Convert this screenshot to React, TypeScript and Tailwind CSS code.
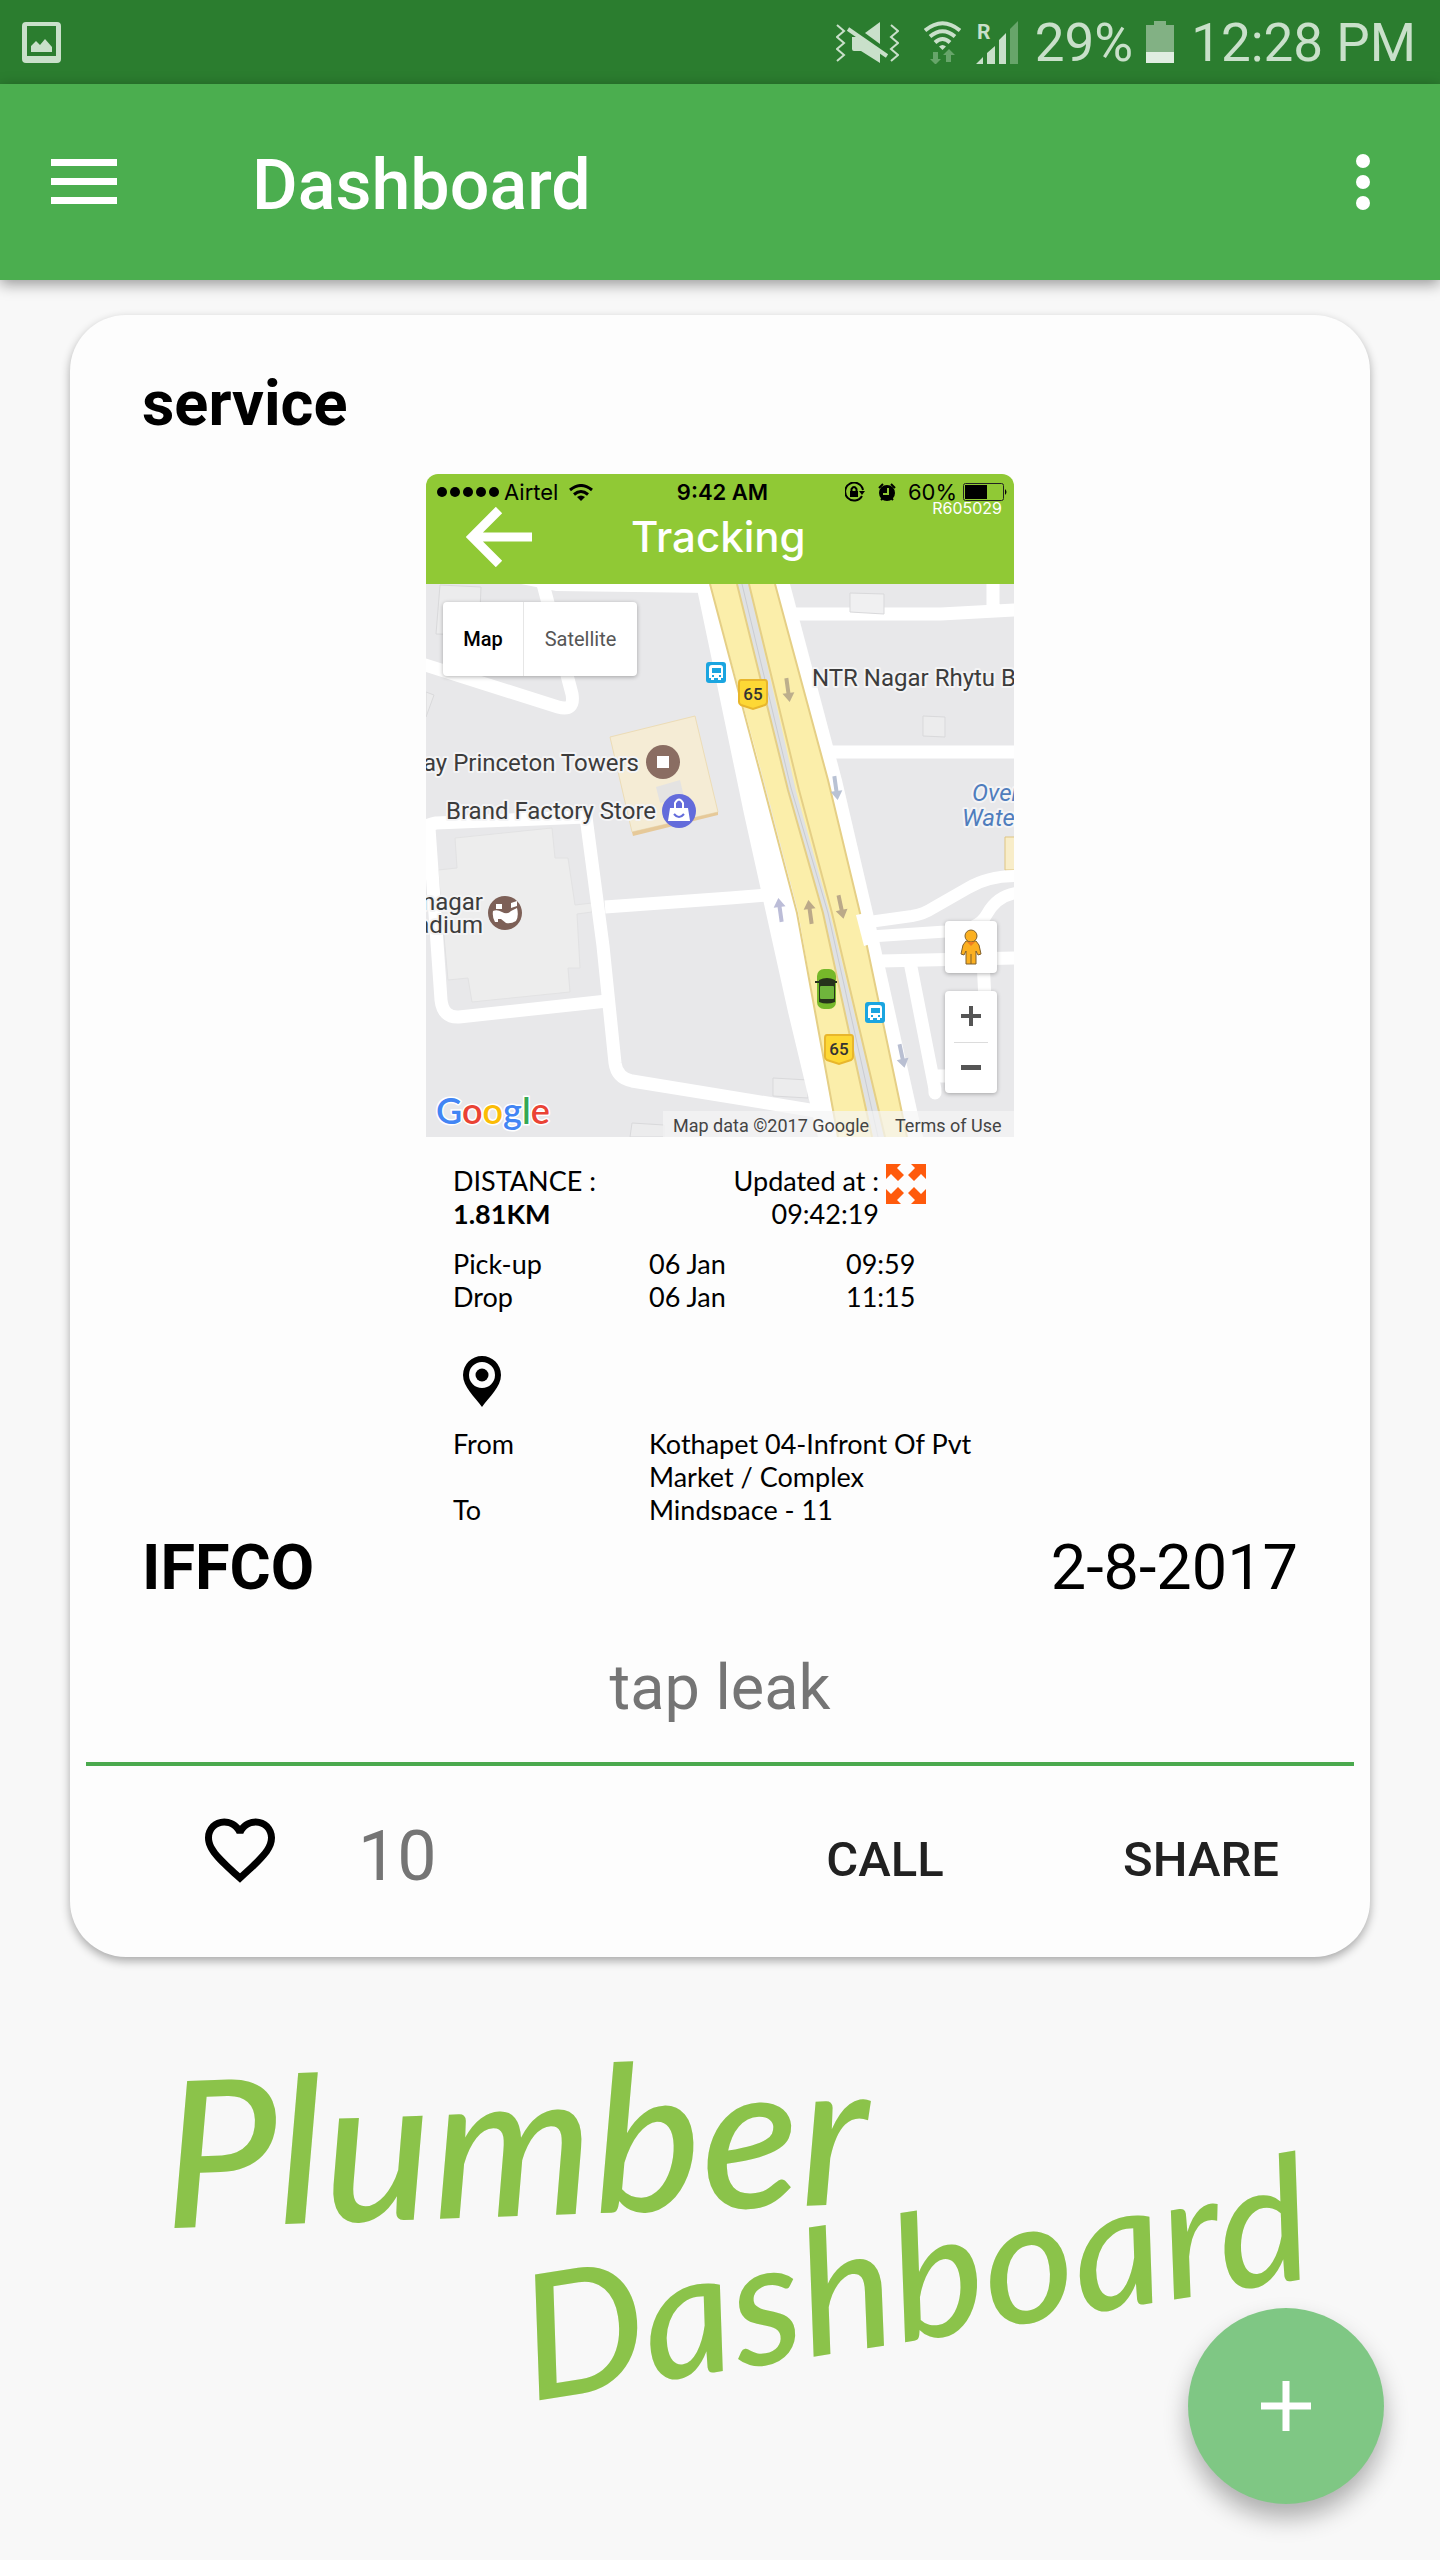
import React from 'react';

const MuteVibrateIcon = () => (
  <svg className="h-[41px] w-[63px]" viewBox="0 0 63 41" fill="#c9e0ca" aria-hidden="true">
    <path d="M1 3l7 6-7 6 7 6-7 6 7 6-7 6M55 3l7 6-7 6 7 6-7 6 7 6-7 6" fill="none" stroke="#c9e0ca" strokeWidth={2} />
    <path d="M29 11L44 0v22z" />
    <path d="M16 15h5l23 15v11L25 29h-7q-2 0-2-2z" />
    <path d="M12 7l39 27" stroke="#c9e0ca" strokeWidth={4} />
  </svg>
);

const StatusWifiIcon = () => (
  <svg className="h-[43px] w-[37px]" viewBox="0 0 37 43" fill="none" stroke="#c9e0ca" strokeWidth={4} aria-hidden="true">
    <path d="M1 9.500Q18.500-5 36 9.500M6 15.500Q18.500 5 31 15.500M11 21.500Q18.500 14.500 26 21.500" />
    <path d="M15 25.500q3.500-3 7 0L18.500 29z" fill="#c9e0ca" stroke="none" />
    <path d="M9 31h5v7h3l-5.500 5.500L6 38h3zM22 41h5v-7h4l-6-6-6 6h3z" fill="#67a56a" stroke="none" />
  </svg>
);

const SignalIcon = () => (
  <svg className="h-[43px] w-[43px]" viewBox="0 0 43 43" fill="#c9e0ca" aria-hidden="true">
    <text x="1" y="18" className="font-['Roboto',sans-serif] text-[21px] font-bold">R</text>
    <path d="M0 43l7-7v7zM11 43V32l8-7v18zM23 43V19l7-7v31z" />
    <path d="M34 43V8l8-8v43z" fill="#67a56a" />
  </svg>
);

const BatteryIcon = () => (
  <svg className="h-[42px] w-[28px]" viewBox="0 0 28 42" aria-hidden="true">
    <path d="M0 4h8V0h12v4h8v27H0z" fill="#82b184" />
    <path d="M0 31h28v11H0z" fill="#e0eee1" />
  </svg>
);

const StatusBar = () => (
  <div className="flex h-[84px] items-center justify-between bg-[#2b7d2f] pr-[24px] pl-[22px] text-[53px] leading-none text-[#c9e0ca]">
    <svg className="h-[41px] w-[39px]" viewBox="0 0 39 41" fill="#c9e0ca" aria-hidden="true">
      <path fillRule="evenodd" d="M4 0h31q4 0 4 4v33q0 4-4 4H4q-4 0-4-4V4q0-4 4-4zm1 4v30h29V4z" />
      <path d="M9 30v-6l5-5 4 4 5-6 7 8v5z" />
    </svg>
    <div className="flex items-center">
      <MuteVibrateIcon />
      <div className="ml-[25px]"><StatusWifiIcon /></div>
      <div className="ml-[15px]"><SignalIcon /></div>
      <span className="ml-[16px] pt-[2px]">29%</span>
      <div className="ml-[13px]"><BatteryIcon /></div>
      <span className="ml-[17px] pt-[2px]">12:28 PM</span>
    </div>
  </div>
);

const AppBar = () => (
  <div className="flex h-[196px] items-center bg-[#4bae4f] pr-[70px] pl-[51px] text-white shadow-[0_4px_14px_rgba(0,0,0,0.4)]">
    <button type="button" aria-label="Open menu">
      <svg className="h-[46px] w-[66px]" viewBox="0 0 66 46" fill="currentColor">
        <path d="M0 0h66v7H0zM0 19h66v7H0zM0 38h66v7H0z" />
      </svg>
    </button>
    <h1 className="ml-[135px] pt-[6px] text-[70px] leading-none font-medium">Dashboard</h1>
    <button type="button" aria-label="More options" className="ml-auto">
      <svg className="h-[56px] w-[14px]" viewBox="0 0 14 56" fill="currentColor">
        <circle cx="7" cy="7" r="7" />
        <circle cx="7" cy="28" r="7" />
        <circle cx="7" cy="49" r="7" />
      </svg>
    </button>
  </div>
);

interface PointProps {
  x: number;
  y: number;
}

const BusStop = ({ x, y }: PointProps) => (
  <g transform={`translate(${x} ${y})`}>
    <rect width="20" height="21" rx="3" fill="#1ba5e0" />
    <path fillRule="evenodd" d="M6 3h8q3 0 3 3v10h-2v2h-3v-2H8v2H5v-2H3V6q0-3 3-3zm0 3v5h9V6zM6 13v2h2v-2zm7 0v2h2v-2z" fill="#fff" />
  </g>
);

const RouteShield = ({ x, y }: PointProps) => (
  <g transform={`translate(${x} ${y})`}>
    <path d="M3 1h24q2 0 2 3v19q0 2-2 3l-12 4-12-4q-2-1-2-3V4q0-3 2-3z" fill="#fdd835" stroke="#e8b62c" strokeWidth={2} />
    <text x="15" y="21" textAnchor="middle" fill="#333" className="text-[17px] font-medium">65</text>
  </g>
);

const DirectionArrow = ({ x, y, angle, color }: PointProps & { angle: number; color: string }) => (
  <path d="M-2-12h4V3h4L0 12-6 3h4z" fill={color} transform={`translate(${x} ${y}) rotate(${angle})`} />
);

const MapDrawing = () => (
  <svg className="block w-full" viewBox="0 0 588 553" role="img" aria-label="Map of NTR Nagar">
    <rect width="588" height="553" fill="#e8e8ea" />

    {/* buildings */}
    <g fill="#ececed" stroke="#d9d9db" strokeWidth={1}>
      <path d="M14 1l41 2-2 48-43-1z" />
      <path d="M0 108l8 3-8 22z" />
      <path d="M497 132l22 1v20l-22-1zM347 494l35 2v18l-35-2zM204 553l2-14 32 2v12z" />
    </g>
    <path d="M29 254l97-10 3 30h13l7 47 17-2v9l-15 2 3 54h-12l2 24-98 10-4-24-20 2-10-110 19-2z" fill="#ededed" stroke="#e2e2e3" />
    <path d="M184 153l85-21 23 96-86 20z" fill="#f5ecd5" stroke="#ecdcb6" />
    <path d="M206 248l86-20v3l-85 21z" fill="#e6c999" />
    <path d="M230 203l24-7 4 17-24 6z" fill="#e4e3e2" />
    <path d="M579 253h10v33h-10z" fill="#f8edc9" stroke="#dfc582" />

    {/* minor roads */}
    <g fill="none" stroke="#fff" strokeWidth={13} strokeLinejoin="round">
      <path d="M117 0l29 110q3 18-14 13L-4 80" />
      <path d="M-4 244q8-4 14-5l150-6 17 129 12 117q2 15 17 18l184 30" />
      <path d="M3 244l12 172q2 18 18 17l148-16" />
      <path d="M179 323l125-9 62-5" />
      <path d="M365 30h150q40-2 75-4M567 0v28M400 168h188" />
      <path d="M436 339l50-7q12-2 21-8l35-20q20-12 48-12" strokeWidth={12} />
      <path d="M437 353l90-6q26-2 34-17 10-18 29-21" strokeWidth={12} />
      <path d="M455 377l135-3M484 378l24 122q1 4 1 9M557 376l2 40M509 492h20" strokeLinecap="round" />
    </g>
    <path d="M424 9l34 1v20l-34-2z" fill="#f0f0f1" stroke="#d9d9db" />
    <path d="M95 0h190v9L130 7z" fill="#fff" />
    <path d="M270 0h20l47 196 61 230 30 127h-36l-30-125-44-198z" fill="#fff" />
    <path d="M345 0h19l52 196 31 133 50 224h-20z" fill="#fff" />

    {/* highway 65 */}
    <path d="M307 0h20l65 270 75 283h-22L362 216z" fill="#dfe1e3" />
    <path d="M284 0h27l50 206 36 123 50 224h-36l-39-226-30-115z" fill="#fbeeaa" />
    <path d="M284 0l52 196 35 133 41 224M311 0l51 206 35 123 49 224" fill="none" stroke="#e5cf86" strokeWidth={2} />
    <path d="M323 0h26l53 196 32 133 47 224h-22l-55-224-34-122z" fill="#fbeeaa" />
    <path d="M323 0l50 206 33 123 53 224M349 0l53 196 32 133 47 224" fill="none" stroke="#e5cf86" strokeWidth={2} />
    <path d="M316 0l49 204 37 125 50 224" fill="none" stroke="#c9cbd0" strokeWidth={1} />
    <path d="M430 331l10-2 8 30-10 3z" fill="#fff" />

    <DirectionArrow x={362} y={106} angle={-8} color="#bcae8c" />
    <DirectionArrow x={410} y={204} angle={-8} color="#b9c2d4" />
    <DirectionArrow x={354} y={326} angle={172} color="#bcbdd8" />
    <DirectionArrow x={384} y={328} angle={172} color="#bba989" />
    <DirectionArrow x={415} y={323} angle={-12} color="#bba989" />
    <DirectionArrow x={476} y={472} angle={-12} color="#b9bfd2" />

    <BusStop x={280} y={78} />
    <BusStop x={439} y={418} />
    <RouteShield x={312} y={95} />
    <RouteShield x={398} y={450} />

    {/* tracked car */}
    <rect x="391" y="385" width="19" height="40" rx="7" fill="#76b82a" />
    <path d="M393 396q8-4 16 0v22q-8 3-16 0z" fill="#26331b" />
    <path d="M389 398h22" stroke="#26331b" strokeWidth={2} />
    <rect x="394" y="402" width="14" height="13" rx="1" fill="#6fb53c" />

    {/* places */}
    <circle cx="237" cy="178" r="17" fill="#8a6d62" />
    <path d="M231 172h12v12h-12z" fill="#fff" />
    <circle cx="253" cy="227" r="17" fill="#636bdb" />
    <path d="M244 224h18l2 13h-22z" fill="#fff" />
    <path d="M249 224v-5q4-7 8 0v5" fill="none" stroke="#fff" strokeWidth={2} />
    <path d="M248 230q5 6 10 0" fill="none" stroke="#636bdb" strokeWidth={2} />
    <circle cx="79" cy="329" r="17" fill="#7d6057" />
    <path d="M67 327q4-2 9 1t9-1l6-3q2 8-1 13-5 3-10 2l-5-4h-3v3h-3q-3-5-2-11zM70 320h6v5h-6zM85 319l6-2v5l-6 2z" fill="#fff" />

    <g fill="#3c3c3c" stroke="#f4f4f5" strokeWidth={4} strokeLinejoin="round" className="text-[24px] [paint-order:stroke]">
      <text x="213" y="187" textAnchor="end">ay Princeton Towers</text>
      <text x="20" y="235">Brand Factory Store</text>
      <text x="386" y="102">NTR Nagar Rhytu B</text>
      <text x="57" y="326" textAnchor="end">nagar</text>
      <text x="57" y="349" textAnchor="end">adium</text>
      <text x="546" y="217" fill="#4f7dbd" className="italic">Over</text>
      <text x="536" y="242" fill="#4f7dbd" className="italic">Water</text>
    </g>

    <path d="M237 527h351v26H237z" fill="#f5f5f5" fillOpacity={0.7} />
    <g fill="#444" className="text-[18px]">
      <text x="247" y="548">Map data ©2017 Google</text>
      <text x="469" y="548">Terms of Use</text>
    </g>
    <text x="10" y="540" stroke="#fff" strokeWidth={3} className="font-['Lato',sans-serif] text-[36px] font-semibold [paint-order:stroke]">
      <tspan fill="#4285f4">G</tspan>
      <tspan fill="#ea4335">o</tspan>
      <tspan fill="#fbbc05">o</tspan>
      <tspan fill="#4285f4">g</tspan>
      <tspan fill="#34a853">l</tspan>
      <tspan fill="#ea4335">e</tspan>
    </text>
  </svg>
);

const MapView = () => (
  <div className="relative">
    <MapDrawing />
    <div className="absolute top-[18px] left-[17px] flex h-[74px] rounded-sm bg-white text-[20px] shadow-[0_1px_4px_rgba(0,0,0,0.3)]">
      <button type="button" className="w-[81px] border-r border-[#e6e6e6] font-medium text-black">Map</button>
      <button type="button" className="w-[113px] text-[#565656]">Satellite</button>
    </div>
    <div className="absolute right-[17px] bottom-[44px] flex w-[52px] flex-col gap-[18px]">
      <button type="button" aria-label="Street view" className="flex h-[52px] items-center justify-center rounded-sm bg-white shadow-[0_1px_4px_rgba(0,0,0,0.3)]">
        <svg className="h-[36px] w-[22px]" viewBox="0 0 22 36" fill="#fbb021" stroke="#80602c" strokeWidth={1}>
          <path d="M6 12h10l3 4 2 9-3 1-2-4v13H6V22l-2 4-3-1 2-9z" />
          <circle cx="11" cy="7" r="6" />
          <path d="M7 13l4 4 4-4z" fill="#ef7d22" stroke="none" />
          <path d="M11 25v10" />
        </svg>
      </button>
      <div className="flex h-[102px] flex-col items-center rounded-sm bg-white text-[#555] shadow-[0_1px_4px_rgba(0,0,0,0.3)]">
        <button type="button" aria-label="Zoom in" className="flex flex-1 items-center">
          <svg className="size-[20px]" viewBox="0 0 20 20" fill="currentColor"><path d="M8 0h4v8h8v4h-8v8H8v-8H0V8h8z" /></svg>
        </button>
        <div className="h-px w-[34px] bg-[#dcdcdc]" />
        <button type="button" aria-label="Zoom out" className="flex flex-1 items-center">
          <svg className="size-[20px]" viewBox="0 0 20 20" fill="currentColor"><path d="M0 7h20v5H0z" /></svg>
        </button>
      </div>
    </div>
  </div>
);

const TrackingHeader = () => (
  <div className="relative h-[110px] bg-[#90c935]">
    <div className="grid h-[36px] grid-cols-[1fr_auto_1fr] items-center pr-[6px] pl-[11px] font-['Inter',sans-serif] text-[22px] leading-none text-black">
      <div className="flex items-center">
        <svg className="h-[10px] w-[62px]" viewBox="0 0 62 10" aria-hidden="true">
          {[5, 18, 31, 44, 57].map((cx) => (
            <circle key={cx} cx={cx} cy="5" r="5" />
          ))}
        </svg>
        <span className="ml-[5px]">Airtel</span>
        <svg className="ml-[11px] h-[17px] w-[24px]" viewBox="0 0 24 17" fill="none" stroke="#000" strokeWidth={3} aria-hidden="true">
          <path d="M1 6q11-9 22 0M5 10.500q7-6 14 0" />
          <path d="M8 13q4-3 8 0l-4 4z" fill="#000" stroke="none" />
        </svg>
      </div>
      <span className="font-semibold">9:42 AM</span>
      <div className="flex items-center justify-end">
        <svg className="size-[20px]" viewBox="0 0 20 20" aria-hidden="true">
          <path d="M17 14a9 9 0 1 1 1-6" fill="none" stroke="#000" strokeWidth={2} />
          <path d="M14 9h6l-3 4z" />
          <path d="M5 9h8v6H5z" />
          <path d="M6.500 9V7q2.500-4 5 0v2" fill="none" stroke="#000" strokeWidth={2} />
        </svg>
        <svg className="ml-[13px] size-[18px]" viewBox="0 0 18 18" aria-hidden="true">
          <circle cx="9" cy="10" r="8" />
          <path d="M1 5l4-4M17 5l-4-4M3 17l2-2M15 17l-2-2" stroke="#000" strokeWidth={2} />
          <path d="M10 5v6H5" fill="none" stroke="#90c935" strokeWidth={2} />
        </svg>
        <span className="ml-[12px]">60%</span>
        <svg className="ml-[6px] h-[18px] w-[45px]" viewBox="0 0 45 18" aria-hidden="true">
          <rect x="0.500" y="0.500" width="40" height="17" rx="2" fill="none" stroke="#222" />
          <path d="M2 2h22v14H2zM42 6q3 3 0 6z" />
        </svg>
      </div>
    </div>
    <div className="flex h-[54px] items-center pl-[40px]">
      <button type="button" aria-label="Back">
        <svg className="h-[60px] w-[66px]" viewBox="0 0 66 60" fill="none" stroke="#fff" strokeWidth={9}>
          <path d="M33 3L6 30l27 27M6 30h60" />
        </svg>
      </button>
      <h3 className="ml-[99px] font-['Inter',sans-serif] text-[42px] leading-none font-medium text-white">Tracking</h3>
    </div>
    <span className="absolute top-[24px] right-[12px] font-['Inter',sans-serif] text-[16px] leading-5 text-white">R605029</span>
  </div>
);

const TripDetails = () => (
  <div className="pt-[27px] pl-[27px] font-['Lato',sans-serif] text-[27px] leading-[33px] text-black">
    <div className="flex">
      <div className="flex-1">
        <p>DISTANCE :</p>
        <p className="font-bold">1.81KM</p>
      </div>
      <div className="text-right">
        <p>Updated at :</p>
        <p>09:42:19</p>
      </div>
      <button type="button" aria-label="Expand map" className="mr-[88px] ml-[7px] self-start">
        <svg className="size-[40px]" viewBox="0 0 40 40" fill="#ff5a0c">
          <path d="M0 0h15l-4 4 7 7-6 6-7-7-5 5zM40 0v15l-5-5-7 7-6-6 7-7-4-4zM0 40V25l5 5 7-7 6 6-7 7 4 4zM40 40H25l4-4-7-7 6-6 7 7 5-5z" />
        </svg>
      </button>
    </div>
    <table className="mt-[17px] w-full table-fixed text-left">
      <tbody>
        <tr>
          <th scope="row" className="font-normal">Pick-up</th>
          <td className="pl-[9px]">06 Jan</td>
          <td className="pl-[19px]">09:59</td>
        </tr>
        <tr>
          <th scope="row" className="font-normal">Drop</th>
          <td className="pl-[9px]">06 Jan</td>
          <td className="pl-[19px]">11:15</td>
        </tr>
      </tbody>
    </table>
    <svg className="mt-[43px] ml-[10px] h-[51px] w-[38px]" viewBox="0 0 38 51" aria-hidden="true">
      <path fillRule="evenodd" d="M19 0a19 19 0 0 1 19 19c0 12-12 22-19 32C12 41 0 31 0 19A19 19 0 0 1 19 0zm0 6a13 13 0 1 0 0 26 13 13 0 0 0 0-26z" />
      <circle cx="19" cy="19" r="6.500" />
    </svg>
    <dl className="mt-[20px] grid grid-cols-[196px_1fr]">
      <dt>From</dt>
      <dd className="pr-[30px]">Kothapet 04-Infront Of Pvt Market / Complex</dd>
      <dt>To</dt>
      <dd>Mindspace - 11</dd>
    </dl>
  </div>
);

const TrackingPreview = () => (
  <div className="mx-auto mt-[33px] h-[1046px] w-[588px] overflow-hidden rounded-t-xl">
    <TrackingHeader />
    <MapView />
    <TripDetails />
  </div>
);

const ServiceCard = () => (
  <article className="rounded-[56px] bg-[#fdfdfd] pt-[52px] text-[63px] leading-[74px] shadow-[0_4px_10px_rgba(0,0,0,0.32)]">
    <h2 className="px-[72px] font-bold text-black">service</h2>
    <TrackingPreview />
    <div className="mt-[11px] flex justify-between px-[72px] text-black">
      <span className="font-bold">IFFCO</span>
      <time dateTime="2017-08-02">2-8-2017</time>
    </div>
    <p className="mt-[46px] text-center text-[#757575]">tap leak</p>
    <hr className="mx-4 mt-[37px] border-t-4 border-[#4aa94d]" />
    <div className="flex h-[191px] items-center pr-[15px] pb-3 pl-[128px]">
      <button type="button" aria-label="Like" className="pb-3">
        <svg className="size-[84px]" viewBox="0 0 24 24" fill="#000">
          <path d="M16.500 3c-1.740 0-3.410.810-4.500 2.090C10.910 3.810 9.240 3 7.500 3 4.420 3 2 5.420 2 8.500c0 3.780 3.400 6.860 8.550 11.540L12 21.350l1.450-1.320C18.600 15.360 22 12.280 22 8.500 22 5.420 19.580 3 16.500 3zm-4.400 15.550l-.1.100-.1-.1C7.140 14.240 4 11.390 4 8.500 4 6.500 5.500 5 7.500 5c1.540 0 3.040.990 3.570 2.360h1.870C13.460 5.990 14.960 5 16.500 5c2 0 3.500 1.500 3.500 3.500 0 2.890-3.140 5.740-7.900 10.050z" />
        </svg>
      </button>
      <span className="ml-[76px] text-[70px] text-[#757575]">10</span>
      <div className="ml-auto flex gap-2 pt-2 text-[49px] font-medium text-[#212121]">
        <button type="button" className="w-[308px]">CALL</button>
        <button type="button" className="w-[308px]">SHARE</button>
      </div>
    </div>
  </article>
);

const App: React.FC = () => (
  <div className="min-h-screen overflow-hidden bg-[#f8f8f8] font-['Roboto',sans-serif]">
    <header>
      <StatusBar />
      <AppBar />
    </header>
    <main className="px-[70px] pt-[35px]">
      <ServiceCard />
      <p className="pt-[110px] font-['Lato',cursive] font-medium whitespace-nowrap text-[#8bc34a] italic">
        <span className="ml-[92px] block w-fit -rotate-2 text-[204px] leading-[140px]">Plumber</span>
        <span className="mt-[16px] ml-[446px] block w-fit -rotate-9 text-[174px] leading-[100px]">Dashboard</span>
      </p>
    </main>
    <button
      type="button"
      aria-label="Add"
      className="fixed right-14 bottom-14 flex size-[196px] items-center justify-center rounded-full bg-[#7fc784] text-white shadow-[0_14px_24px_rgba(0,0,0,0.3)]"
    >
      <svg className="size-[50px]" viewBox="0 0 50 50" fill="currentColor">
        <path d="M21.500 0h7v21.500H50v7H28.500V50h-7V28.500H0v-7h21.500z" />
      </svg>
    </button>
  </div>
);

export default App;
